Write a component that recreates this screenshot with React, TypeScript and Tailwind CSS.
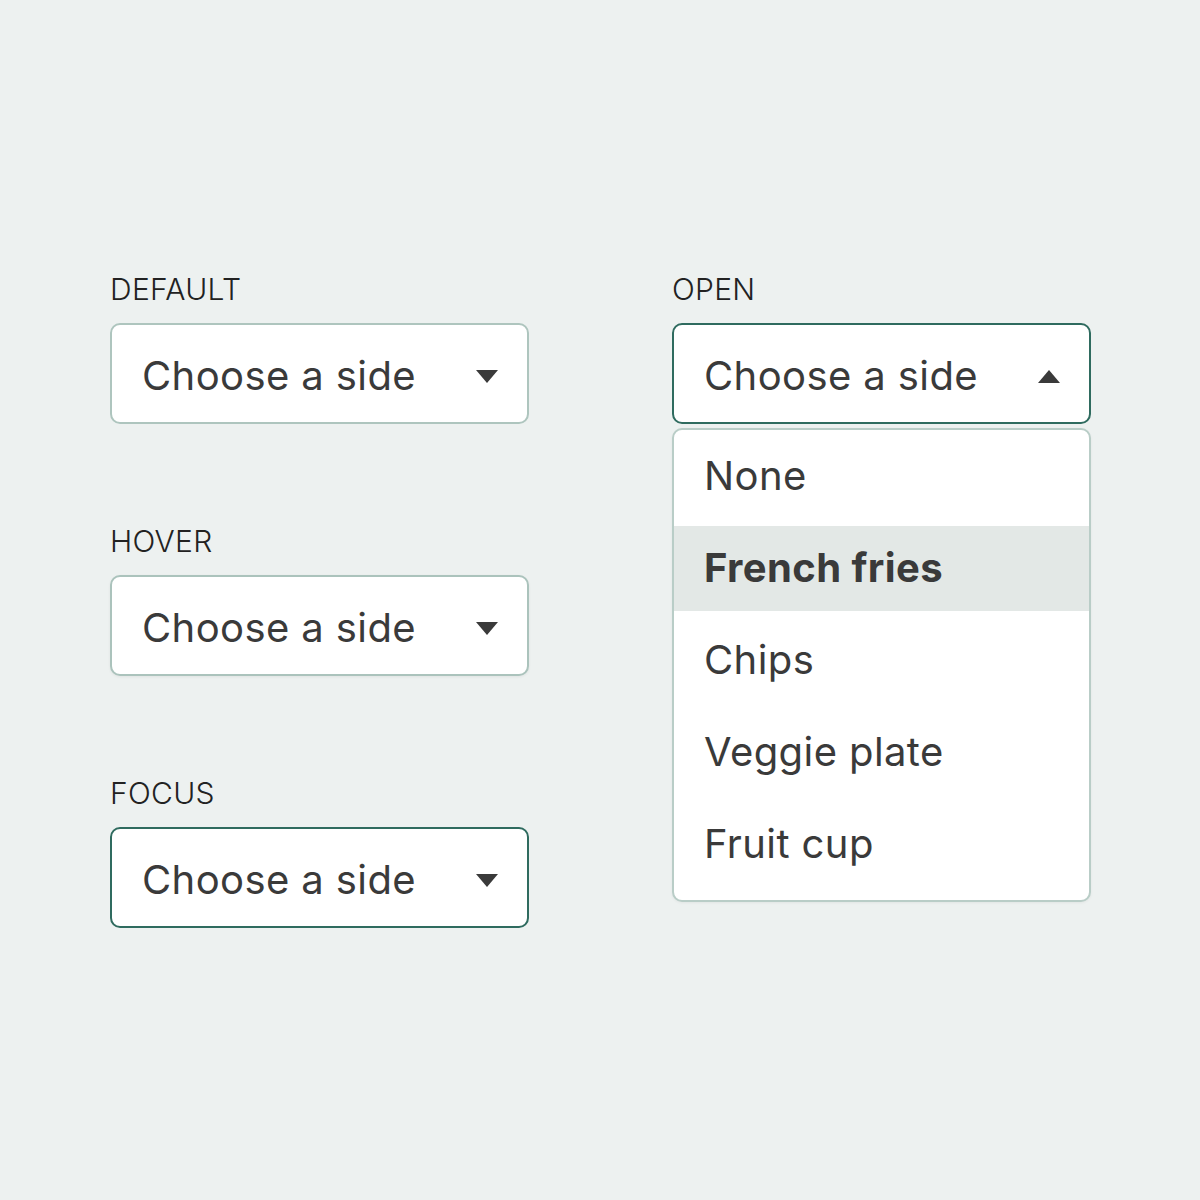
import React from 'react';

const font = "font-['Inter','Noto_Sans',sans-serif]";

function Caret({ up = false }: { up?: boolean }) {
  return (
    <svg width="22" height="13" viewBox="0 0 22 13" className="shrink-0">
      {up ? <path d="M11 0 L22 13 L0 13 Z" fill="#3a3a3a" /> : <path d="M0 0 L22 0 L11 13 Z" fill="#3a3a3a" />}
    </svg>
  );
}

function SelectBox({ variant, open = false }: { variant: 'default' | 'hover' | 'focus'; open?: boolean }) {
  const border =
    variant === 'focus'
      ? 'border-[#2f6b5f]'
      : variant === 'hover'
      ? 'border-[#abc3bc] shadow-[0_1px_3px_rgba(0,0,0,0.06)]'
      : 'border-[#aec5be]';
  return (
    <div
      className={`h-[101px] w-[419px] rounded-[10px] border-2 bg-white flex items-center justify-between pl-[30px] pr-[29px] pt-[5px] ${border}`}
    >
      <span className="text-[40px] leading-none tracking-[0.01em] text-[#3a3a3a]">Choose a side</span>
      <Caret up={open} />
    </div>
  );
}

function Label({ children }: { children: React.ReactNode }) {
  return <div className="text-[30px] leading-[30px] font-light tracking-[0.01em] text-[#222] mb-[19px]">{children}</div>;
}

const options = ['None', 'French fries', 'Chips', 'Veggie plate', 'Fruit cup'];

export default function App() {
  return (
    <div className={`min-h-[1200px] w-[1200px] bg-[#edf1f0] ${font} pt-[274px] pl-[110px] flex gap-[143px]`}>
      <div className="flex flex-col gap-[102px]">
        <div>
          <Label>DEFAULT</Label>
          <SelectBox variant="default" />
        </div>
        <div>
          <Label>HOVER</Label>
          <SelectBox variant="hover" />
        </div>
        <div>
          <Label>FOCUS</Label>
          <SelectBox variant="focus" />
        </div>
      </div>

      <div className="flex flex-col">
        <Label>OPEN</Label>
        <SelectBox variant="focus" open />
        <div className="mt-[4px] w-[419px] rounded-[10px] border-2 border-[#b9cdc7] bg-white pb-[10px] shadow-[0_1px_3px_rgba(0,0,0,0.05)] overflow-hidden">
          {options.map((opt) => {
            const active = opt === 'French fries';
            return (
              <div key={opt} className="h-[92px] py-[3.5px]">
                <div
                  className={`h-full flex items-center pl-[30px] text-[40px] leading-none tracking-[0.01em] text-[#3a3a3a] ${
                    active ? 'bg-[#e3e8e6] font-bold' : ''
                  }`}
                >
                  {opt}
                </div>
              </div>
            );
          })}
        </div>
      </div>
    </div>
  );
}
